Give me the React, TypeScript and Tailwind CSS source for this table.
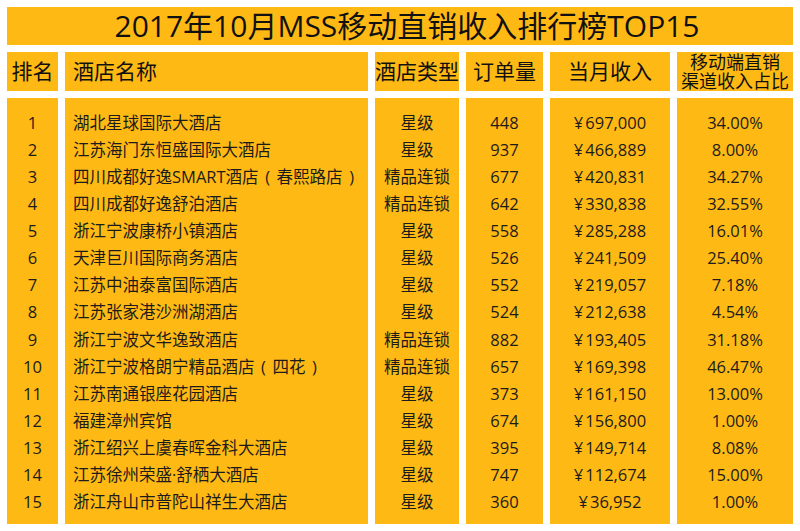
import React from "react";

const rows: [string, string, string, string, string, string][] = [
  ["1", "湖北星球国际大酒店", "星级", "448", "697,000", "34.00%"],
  ["2", "江苏海门东恒盛国际大酒店", "星级", "937", "466,889", "8.00%"],
  ["3", "四川成都好逸SMART酒店（春熙路店）", "精品连锁", "677", "420,831", "34.27%"],
  ["4", "四川成都好逸舒泊酒店", "精品连锁", "642", "330,838", "32.55%"],
  ["5", "浙江宁波康桥小镇酒店", "星级", "558", "285,288", "16.01%"],
  ["6", "天津巨川国际商务酒店", "星级", "526", "241,509", "25.40%"],
  ["7", "江苏中油泰富国际酒店", "星级", "552", "219,057", "7.18%"],
  ["8", "江苏张家港沙洲湖酒店", "星级", "524", "212,638", "4.54%"],
  ["9", "浙江宁波文华逸致酒店", "精品连锁", "882", "193,405", "31.18%"],
  ["10", "浙江宁波格朗宁精品酒店（四花）", "精品连锁", "657", "169,398", "46.47%"],
  ["11", "江苏南通银座花园酒店", "星级", "373", "161,150", "13.00%"],
  ["12", "福建漳州宾馆", "星级", "674", "156,800", "1.00%"],
  ["13", "浙江绍兴上虞春晖金科大酒店", "星级", "395", "149,714", "8.08%"],
  ["14", "江苏徐州荣盛·舒栖大酒店", "星级", "747", "112,674", "15.00%"],
  ["15", "浙江舟山市普陀山祥生大酒店", "星级", "360", "36,952", "1.00%"],
];

function renderName(s: string) {
  const parts: React.ReactNode[] = [];
  let buf = "";
  let k = 0;
  for (const ch of s) {
    if (ch === "（" || ch === "）") {
      if (buf) parts.push(buf);
      buf = "";
      parts.push(
        <span key={k++} className="inline-block w-[18px] text-center">
          {ch === "（" ? "(" : ")"}
        </span>
      );
    } else {
      buf += ch;
    }
  }
  if (buf) parts.push(buf);
  return parts;
}

function Col({
  idx,
  align,
  prefix,
}: {
  idx: number;
  align: "center" | "left";
  prefix?: string;
}) {
  return (
    <div className="bg-[#ffb914] flex flex-col pt-[12px]">
      {rows.map((r, i) => (
        <div
          key={i}
          className={
            align === "left"
              ? "h-[27.05px] flex items-center pl-[8px] whitespace-nowrap"
              : "h-[27.05px] flex items-center justify-center whitespace-nowrap"
          }
        >
          {prefix ? <span className="mr-[2px]">{prefix}</span> : null}
          {align === "left" ? renderName(r[idx]) : r[idx]}
        </div>
      ))}
    </div>
  );
}

export default function App() {
  return (
    <div className="w-[800px] h-[531px] bg-white p-[7px] flex flex-col font-['Open_Sans','Noto_Sans_CJK_SC',sans-serif] overflow-hidden">
      <div className="h-[38px] bg-[#ffb914] flex items-center justify-center text-[30px] leading-none text-[#111] pl-[14px]">
        2017年10月MSS移动直销收入排行榜TOP15
      </div>
      <div className="mt-[7px] h-[39px] grid grid-cols-[51px_303px_84px_77px_120px_116px] gap-x-[7px] text-[#111]">
        <div className="bg-[#ffb914] flex items-center justify-center text-[21px]">排名</div>
        <div className="bg-[#ffb914] flex items-center pl-[8px] text-[21px]">酒店名称</div>
        <div className="bg-[#ffb914] flex items-center justify-center text-[21px] whitespace-nowrap">酒店类型</div>
        <div className="bg-[#ffb914] flex items-center justify-center text-[21px]">订单量</div>
        <div className="bg-[#ffb914] flex items-center justify-center text-[21px]">当月收入</div>
        <div className="bg-[#ffb914] flex items-center justify-center">
          <p className="text-[18px] leading-[19px] text-center whitespace-pre-line">{"移动端直销\n渠道收入占比"}</p>
        </div>
      </div>
      <div className="mt-[7px] flex-1 grid grid-cols-[51px_303px_84px_77px_120px_116px] gap-x-[7px] text-[16.5px] text-[#1c1c1c]">
        <Col idx={0} align="center" />
        <Col idx={1} align="left" />
        <Col idx={2} align="center" />
        <Col idx={3} align="center" />
        <Col idx={4} align="center" prefix="¥" />
        <Col idx={5} align="center" />
      </div>
    </div>
  );
}
